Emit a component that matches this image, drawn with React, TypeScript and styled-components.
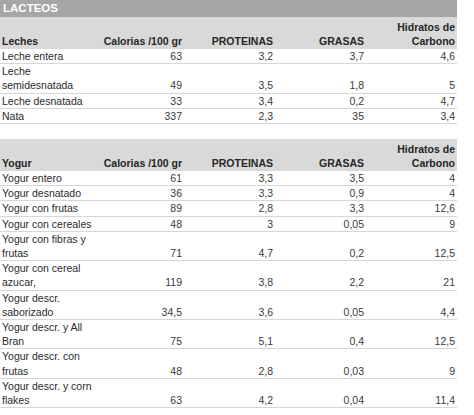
import React from "react";
import styled, { createGlobalStyle } from "styled-components";

interface IRow {
  name: string;
  kcal: string;
  prot: string;
  fat: string;
  carb: string;
}

interface ISection {
  title: string;
  rows: IRow[];
}

const sections: ISection[] = [
  {
    title: "Leches",
    rows: [
      { name: "Leche entera", kcal: "63", prot: "3,2", fat: "3,7", carb: "4,6" },
      { name: "Leche\nsemidesnatada", kcal: "49", prot: "3,5", fat: "1,8", carb: "5" },
      { name: "Leche desnatada", kcal: "33", prot: "3,4", fat: "0,2", carb: "4,7" },
      { name: "Nata", kcal: "337", prot: "2,3", fat: "35", carb: "3,4" },
    ],
  },
  {
    title: "Yogur",
    rows: [
      { name: "Yogur entero", kcal: "61", prot: "3,3", fat: "3,5", carb: "4" },
      { name: "Yogur desnatado", kcal: "36", prot: "3,3", fat: "0,9", carb: "4" },
      { name: "Yogur con frutas", kcal: "89", prot: "2,8", fat: "3,3", carb: "12,6" },
      { name: "Yogur con cereales", kcal: "48", prot: "3", fat: "0,05", carb: "9" },
      { name: "Yogur con fibras y\nfrutas", kcal: "71", prot: "4,7", fat: "0,2", carb: "12,5" },
      { name: "Yogur con cereal\nazucar,", kcal: "119", prot: "3,8", fat: "2,2", carb: "21" },
      { name: "Yogur descr.\nsaborizado", kcal: "34,5", prot: "3,6", fat: "0,05", carb: "4,4" },
      { name: "Yogur descr. y All\nBran", kcal: "75", prot: "5,1", fat: "0,4", carb: "12,5" },
      { name: "Yogur descr. con\nfrutas", kcal: "48", prot: "2,8", fat: "0,03", carb: "9" },
      { name: "Yogur descr. y corn\nflakes", kcal: "63", prot: "4,2", fat: "0,04", carb: "11,4" },
    ],
  },
];

const GlobalStyle = createGlobalStyle`
  body {
    margin: 0;
    background: #ffffff;
    font-family: "Liberation Sans", Arial, sans-serif;
  }
`;

const Sheet = styled.div`
  width: 457px;
  display: flex;
  flex-direction: column;
`;

const Title = styled.div`
  height: 17px;
  background: #a6a6a6;
  color: #ffffff;
  font-weight: bold;
  font-size: 11.5px;
  line-height: 17px;
  padding-left: 3px;
`;

const Table = styled.table<{ $gap?: boolean }>`
  width: 100%;
  table-layout: fixed;
  border-collapse: collapse;
  font-size: 10.5px;
  margin-top: ${(p) => (p.$gap ? "15px" : "0")};
`;

const HeadCell = styled.th<{ $left?: boolean }>`
  background: #d9d9d9;
  color: #262626;
  font-weight: bold;
  text-align: ${(p) => (p.$left ? "left" : "right")};
  vertical-align: bottom;
  height: 31px;
  line-height: 14px;
  padding: 0 2px 1px;
  white-space: nowrap;
`;

const Cell = styled.td<{ $left?: boolean }>`
  color: ${(p) => (p.$left ? "#2a2a2a" : "#3a3a3a")};
  text-align: ${(p) => (p.$left ? "left" : "right")};
  vertical-align: bottom;
  white-space: pre;
  overflow: visible;
  line-height: 14.2px;
  padding: 0 2px 0;
  border-bottom: 1px solid #d6d6d6;
`;

const Section = ({ title, rows, gap }: ISection & { gap?: boolean }) => (
  <Table $gap={gap}>
    <colgroup>
      <col style={{ width: 93 }} />
      <col style={{ width: 91 }} />
      <col style={{ width: 91 }} />
      <col style={{ width: 91 }} />
      <col style={{ width: 91 }} />
    </colgroup>
    <thead>
      <tr>
        <HeadCell $left>{title}</HeadCell>
        <HeadCell>Calorias /100 gr</HeadCell>
        <HeadCell>PROTEINAS</HeadCell>
        <HeadCell>GRASAS</HeadCell>
        <HeadCell>
          Hidratos de
          <br />
          Carbono
        </HeadCell>
      </tr>
    </thead>
    <tbody>
      {rows.map((r) => (
        <tr key={r.name}>
          <Cell $left>{r.name}</Cell>
          <Cell>{r.kcal}</Cell>
          <Cell>{r.prot}</Cell>
          <Cell>{r.fat}</Cell>
          <Cell>{r.carb}</Cell>
        </tr>
      ))}
    </tbody>
  </Table>
);

export default function App() {
  return (
    <>
      <GlobalStyle />
      <Sheet>
        <Title>LACTEOS</Title>
        {sections.map((s, i) => (
          <Section key={s.title} title={s.title} rows={s.rows} gap={i > 0} />
        ))}
      </Sheet>
    </>
  );
}
